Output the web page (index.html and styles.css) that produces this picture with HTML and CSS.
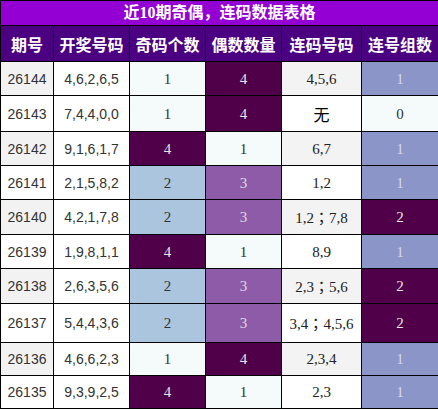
FILE: index.html
```html
<!DOCTYPE html>
<html lang="zh">
<head>
<meta charset="utf-8">
<title>近10期奇偶，连码数据表格</title>
<link rel="stylesheet" href="styles.css">
</head>
<body>
<table class="tbl">
  <colgroup>
    <col class="c1"><col class="c2"><col class="c3"><col class="c4"><col class="c5"><col class="c6">
  </colgroup>
  <thead>
    <tr class="title-row"><th colspan="6" class="title">近10期奇偶，连码数据表格</th></tr>
    <tr class="head-row">
      <th>期号</th><th>开奖号码</th><th>奇码个数</th><th>偶数数量</th><th>连码号码</th><th>连号组数</th>
    </tr>
  </thead>
  <tbody>
    <tr class="odd"><td class="no">26144</td><td class="nums">4,6,2,6,5</td><td class="plain">1</td><td class="dark">4</td><td class="lian">4,5,6</td><td class="blue">1</td></tr>
    <tr class="even h36"><td class="no">26143</td><td class="nums">7,4,4,0,0</td><td class="plain">1</td><td class="dark">4</td><td class="lian wu">无</td><td class="plain">0</td></tr>
    <tr class="odd"><td class="no">26142</td><td class="nums">9,1,6,1,7</td><td class="dark">4</td><td class="plain">1</td><td class="lian">6,7</td><td class="blue">1</td></tr>
    <tr class="even"><td class="no">26141</td><td class="nums">2,1,5,8,2</td><td class="steel">2</td><td class="mid">3</td><td class="lian">1,2</td><td class="blue">1</td></tr>
    <tr class="odd h35"><td class="no">26140</td><td class="nums">4,2,1,7,8</td><td class="steel">2</td><td class="mid">3</td><td class="lian">1,2<span class="semi">；</span>7,8</td><td class="dark">2</td></tr>
    <tr class="even"><td class="no">26139</td><td class="nums">1,9,8,1,1</td><td class="dark">4</td><td class="plain">1</td><td class="lian">8,9</td><td class="blue">1</td></tr>
    <tr class="odd h35"><td class="no">26138</td><td class="nums">2,6,3,5,6</td><td class="steel">2</td><td class="mid">3</td><td class="lian">2,3<span class="semi">；</span>5,6</td><td class="dark">2</td></tr>
    <tr class="even h39"><td class="no">26137</td><td class="nums">5,4,4,3,6</td><td class="steel">2</td><td class="mid">3</td><td class="lian">3,4<span class="semi">；</span>4,5,6</td><td class="dark">2</td></tr>
    <tr class="odd h33"><td class="no">26136</td><td class="nums">4,6,6,2,3</td><td class="plain">1</td><td class="dark">4</td><td class="lian">2,3,4</td><td class="blue">1</td></tr>
    <tr class="even h33"><td class="no">26135</td><td class="nums">9,3,9,2,5</td><td class="dark">4</td><td class="plain">1</td><td class="lian">2,3</td><td class="blue">1</td></tr>
  </tbody>
</table>
</body>
</html>
```

FILE: styles.css
```css
html, body {
  margin: 0;
  padding: 0;
  background: #ffffff;
}

.tbl {
  border-collapse: collapse;
  width: 438px;
  table-layout: fixed;
  font-family: "Liberation Serif", "Noto Sans CJK SC", serif;
  font-size: 15px;
  color: #333333;
}

.c1 { width: 53px; }
.c2 { width: 76px; }
.c3 { width: 76px; }
.c4 { width: 76px; }
.c5 { width: 80px; }
.c6 { width: 77px; }

.tbl th,
.tbl td {
  border: 1px solid #000000;
  text-align: center;
  padding: 0;
}

.title {
  background: #9400d3;
  color: #ffffff;
  height: 24px;
  font-size: 16px;
  font-weight: bold;
  font-family: "Liberation Serif", "Noto Sans CJK SC", serif;
  line-height: 24px;
}

.head-row th {
  background: #4b0082;
  color: #ffffff;
  height: 35px;
  font-size: 16px;
  font-weight: bold;
  font-family: "Noto Sans CJK SC", sans-serif;
  line-height: 20px;
}

.tbl td {
  height: 33px;
  line-height: 20px;
}

.h33 td { height: 32px; }
.h35 td { height: 34px; }
.h36 td { height: 35px; }
.h39 td { height: 38px; }

.no,
.nums {
  font-family: "Liberation Sans", "Noto Sans CJK SC", sans-serif;
  font-size: 14px;
  color: #333333;
}

.odd .no { background: #f2f2f2; }
.even .no { background: #ffffff; }
.nums { background: #ffffff; }

.odd .lian { background: #f3f3f3; }
.even .lian { background: #ffffff; }

.lian { color: #222222; }

.wu {
  font-family: "Noto Sans CJK SC", sans-serif;
  font-size: 16px;
  color: #000000;
}

.semi {
  font-family: "Noto Sans CJK TC", sans-serif;
}

.plain {
  background: #f5fbfb;
  color: #333333;
}

.dark {
  background: #4f0049;
  color: #e6e6e6;
}

.mid {
  background: #8e5ba9;
  color: #dddddd;
}

.steel {
  background: #abc5df;
  color: #333333;
}

.blue {
  background: #8c95c8;
  color: #d8d8e8;
}
```
